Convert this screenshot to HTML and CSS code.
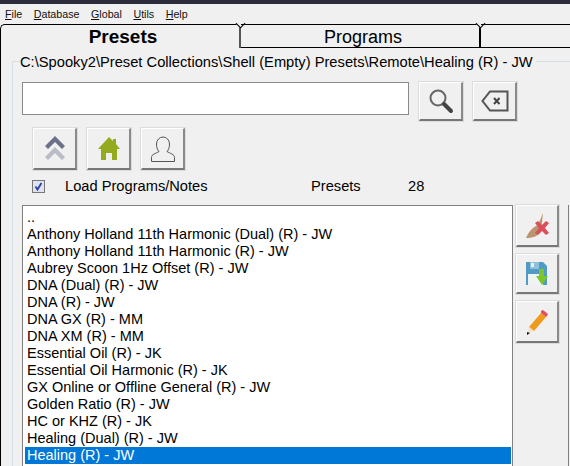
FILE: index.html
```html
<!DOCTYPE html>
<html lang="en">
<head>
  <meta charset="UTF-8"/>
  <title>Presets</title>
  <link rel="stylesheet" href="styles.css">
</head>
<body>
  <div class="titlebar"></div>

  <nav class="menu">
    <a><u>F</u>ile</a>
    <a><u>D</u>atabase</a>
    <a><u>G</u>lobal</a>
    <a><u>U</u>tils</a>
    <a><u>H</u>elp</a>
  </nav>

  <div class="tabs">
    <div class="tab tab-active">Presets</div>
    <div class="tab tab-programs">Programs</div>
    <div class="tab tab-rest"></div>
  </div>

  <section class="panel">
    <div class="group">
      <div class="path">C:\Spooky2\Preset Collections\Shell (Empty) Presets\Remote\Healing (R) - JW</div>

      <div class="search-row">
        <input class="search" type="text">
        <button class="btn btn-search">
          <svg width="26" height="26" viewBox="0 0 26 26"><circle cx="10" cy="10" r="7.5" fill="none" stroke="#666" stroke-width="2"/><path d="M16 16l7 7" stroke="#444" stroke-width="4" stroke-linecap="round"/></svg>
        </button>
        <button class="btn btn-search">
          <svg width="28" height="22" viewBox="0 0 28 22"><path d="M9 1.500h17.500v19H9L1.500 11z" fill="none" stroke="#555" stroke-width="2"/><path d="M13 8l5.500 6M18.500 8L13 14" stroke="#444" stroke-width="2"/></svg>
        </button>
      </div>

      <div class="nav-row">
        <button class="btn btn-nav">
          <svg width="22" height="25" viewBox="0 0 22 25"><path d="M1 10L11 0l10 10-3 3-7-7-7 7z" fill="#6b7186"/><path d="M1 21l10-10 10 10-3 3-7-7-7 7z" fill="#b9bbc6"/></svg>
        </button>
        <button class="btn btn-nav">
          <svg width="22" height="23" viewBox="0 0 22 23"><path d="M11 0l4 4V2h3v5l4 5h-3v11h-5v-7H8v7H3V12H0z" fill="#95ab1f"/></svg>
        </button>
        <button class="btn btn-nav">
          <svg width="24" height="26" viewBox="0 0 24 26"><path d="M8 15.500c-1.500-1.500-2.500-4-2.500-7.500a6.500 7 0 0 1 13 0c0 3.500-1 6-2.500 7.500 3 2 7.500 2.500 7.500 6v4H.5v-4c0-3.500 4.500-4 7.500-6z" fill="none" stroke="#555" stroke-width="1"/></svg>
        </button>
      </div>

      <div class="info-row">
        <span class="check">
          <svg width="11" height="11" viewBox="0 0 11 11"><path d="M2.500 5.500l2 3L8.500 2" fill="none" stroke="#2b3fa8" stroke-width="1.800"/></svg>
        </span>
        <span class="load-label">Load Programs/Notes</span>
        <span class="count-label">Presets</span>
        <span class="count">28</span>
      </div>

      <div class="list-row">
        <ul class="list">
          <li>..</li>
          <li>Anthony Holland 11th Harmonic (Dual) (R) - JW</li>
          <li>Anthony Holland 11th Harmonic (R) - JW</li>
          <li>Aubrey Scoon 1Hz Offset (R) - JW</li>
          <li>DNA (Dual) (R) - JW</li>
          <li>DNA (R) - JW</li>
          <li>DNA GX (R) - MM</li>
          <li>DNA XM (R) - MM</li>
          <li>Essential Oil (R) - JK</li>
          <li>Essential Oil Harmonic (R) - JK</li>
          <li>GX Online or Offline General (R) - JW</li>
          <li>Golden Ratio (R) - JW</li>
          <li>HC or KHZ (R) - JK</li>
          <li>Healing (Dual) (R) - JW</li>
          <li class="selected">Healing (R) - JW</li>
        </ul>

        <div class="side">
          <button class="btn btn-side">
            <svg width="28" height="28" viewBox="0 0 28 28"><path d="M20 1l-5 12c-5 2-9 6-12 13 6 0 12-1 15-7z" fill="#bb9470"/><path d="M12 11l3-2 4 4 4-4 3 2-4 5 4 5-3 2-4-4-4 4-3-2 4-5z" fill="#d9505a"/></svg>
          </button>
          <button class="btn btn-side btn-side-short">
            <svg width="22" height="23" viewBox="0 0 22 23"><path d="M0 0h17l4 4v19H0z" fill="#4f9bc4"/><path d="M4 0h9v7H4z" fill="#8fc0dc"/><path d="M5 1h3v4H5z" fill="#e6f0f5"/><path d="M2 12h15v11H2z" fill="#eef3f5"/><path d="M13 7h5v7h4l-6 9-6-9h3z" fill="#7cc52a"/></svg>
          </button>
          <button class="btn btn-side">
            <svg width="22" height="26" viewBox="0 0 22 26"><path d="M15 4l5 4L8 22l-5-4z" fill="#ee9a1c"/><path d="M15 2l2-1 5 4-1 2-1 1-5-4z" fill="#e0505a"/><path d="M3 18l5 4-6 2z" fill="#f2e2c4"/><path d="M1 23l3 1-3 2z" fill="#111"/></svg>
          </button>
        </div>
        <div class="next-group"></div>
      </div>
    </div>
  </section>
</body>
</html>
```

FILE: styles.css
```css
html, body {
  margin: 0;
  padding: 0;
  height: 466px;
  overflow: hidden;
  background: #f0f0f0;
  color: #000;
  font-family: "Liberation Sans", Arial, sans-serif;
  font-size: 14.67px;
}

.titlebar {
  height: 4px;
  background: #2b2b3a;
}

/* Menu */
.menu {
  display: flex;
  gap: 11.5px;
  height: 20px;
  padding-left: 5px;
  align-items: center;
  font-size: 10.7px;
}

.menu a {
  color: #111;
}

/* Tabs */
.tabs {
  display: flex;
  height: 24px;
}

.tab {
  position: relative;
  box-sizing: border-box;
  height: 24px;
  padding-left: 6px;
  border-top: 1px solid #000;
  border-bottom: 1px solid #000;
  border-right: 2px solid #000;
  text-align: center;
  font-size: 18px;
  line-height: 24px;
}

.tab::after {
  content: "";
  position: absolute;
  top: -5px;
  right: -5px;
  width: 6px;
  height: 6px;
  background: #f0f0f0;
  border-right: 1px solid #000;
  border-bottom: 1px solid #000;
  transform: rotate(45deg);
}

.tab-active {
  width: 241px;
  border-bottom: 0;
  border-left: 1px solid #000;
  border-right-color: #555;
  border-top-left-radius: 5px;
  font-weight: bold;
  font-size: 19px;
}

.tab-programs {
  width: 240px;
}

.tab-rest {
  flex: 1;
  border-right: 0;
}

.tab-rest::after {
  display: none;
}

/* Main panel */
.panel {
  box-sizing: border-box;
  height: 418px;
  padding: 13px 0 0 11px;
  border-left: 1px solid #000;
}

.group {
  position: relative;
  height: 405px;
  padding-left: 9px;
  border-left: 1px solid #d5dde5;
  border-top: 1px solid #d5dde5;
}

.path {
  position: absolute;
  top: -9px;
  left: 7px;
  padding: 0 3px 0 0;
  background: #f0f0f0;
  font-size: 14.7px;
  line-height: 18px;
  white-space: nowrap;
}

.btn {
  display: flex;
  align-items: center;
  justify-content: center;
  box-sizing: border-box;
  padding: 0;
  background: #f0f0f0;
  border: 1px solid #e8e8e8;
  border-top-color: #fff;
  border-left-color: #fff;
  border-right: 2px solid #8a8a8a;
  border-bottom: 2px solid #777;
  box-shadow: 0 0 0 1px #dcdcdc;
}

.search-row {
  display: flex;
  margin-top: 20px;
}

.search {
  box-sizing: border-box;
  width: 387px;
  height: 33px;
  margin: 0 10px 0 0;
  padding: 0;
  background: #fff;
  border: 1px solid #8a8a8a;
}

.btn-search {
  width: 44px;
  height: 39px;
  margin-right: 10px;
}

.nav-row {
  display: flex;
  gap: 10px;
  margin: 7px 0 0 11px;
}

.btn-nav {
  width: 44px;
  height: 42px;
}

.info-row {
  display: flex;
  align-items: center;
  height: 18px;
  margin: 7px 0 0 10px;
}

.check {
  display: flex;
  align-items: center;
  justify-content: center;
  box-sizing: border-box;
  width: 13px;
  height: 13px;
  background: #dfe3f0;
  border: 1px solid #777;
}

.load-label {
  width: 246px;
  margin-left: 20px;
}

.count-label {
  width: 97px;
}

/* List */
.list-row {
  display: flex;
  margin-top: 10px;
}

.list {
  box-sizing: border-box;
  width: 491px;
  height: 270px;
  margin: 0;
  padding: 3px 1px 0 2px;
  list-style: none;
  background: #fff;
  border: 1px solid #808080;
  border-bottom: 0;
}

.list li {
  height: 17px;
  padding-left: 2px;
  font-size: 14.5px;
  line-height: 17px;
  white-space: nowrap;
}

.list .selected {
  background: #0078d7;
  color: #fff;
}

.side {
  display: flex;
  flex-direction: column;
  gap: 7px;
  margin-left: 3px;
}

.btn-side {
  width: 43px;
  height: 42px;
}

.btn-side-short {
  height: 40px;
}

.next-group {
  width: 1px;
  height: 270px;
  margin-left: 9px;
  background: #808080;
}
```
